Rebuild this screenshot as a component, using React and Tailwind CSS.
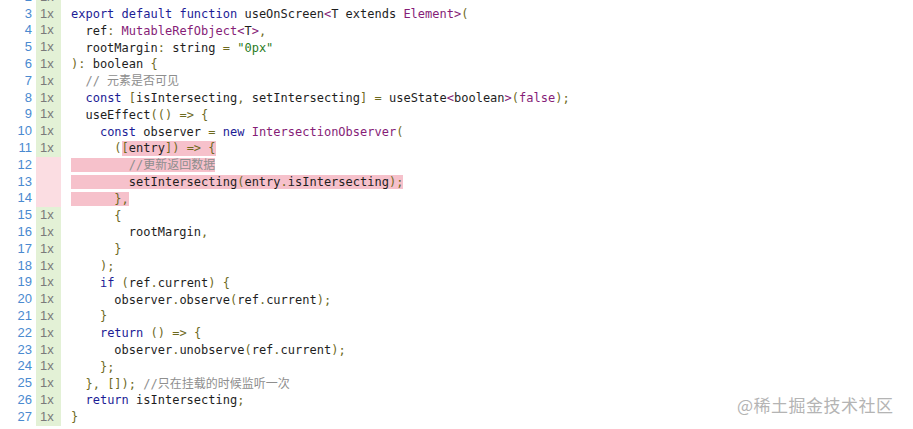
import React from "react";

const K = "text-[#1c1c96]";
const T = "text-[#861d77]";
const S = "text-[#2a7b1c]";
const P = "text-[#6e6a1e]";
const C = "text-[#8e8e8e]";

const lines = [
  { n: 2, t: [] },
  { n: 3, t: [[K, "export"], [null, " "], [K, "default"], [null, " "], [K, "function"], [null, " useOnScreen"], [T, "<"], [null, "T extends "], [T, "Element"], [T, ">"], [P, "("]] },
  { n: 4, t: [[null, "  ref"], [P, ":"], [null, " "], [T, "MutableRefObject"], [T, "<"], [null, "T"], [T, ">"], [P, ","]] },
  { n: 5, t: [[null, "  rootMargin"], [P, ":"], [null, " string "], [P, "="], [null, " "], [S, "\"0px\""]] },
  { n: 6, t: [[P, ")"], [P, ":"], [null, " boolean "], [P, "{"]] },
  { n: 7, t: [[C, "  // 元素是否可见"]] },
  { n: 8, t: [[null, "  "], [K, "const"], [null, " "], [P, "["], [null, "isIntersecting"], [P, ","], [null, " setIntersecting"], [P, "]"], [null, " "], [P, "="], [null, " useState"], [T, "<"], [null, "boolean"], [T, ">"], [P, "("], [T, "false"], [P, ")"], [P, ";"]] },
  { n: 9, t: [[null, "  useEffect"], [P, "(()"], [null, " "], [P, "=>"], [null, " "], [P, "{"]] },
  { n: 10, t: [[null, "    "], [K, "const"], [null, " observer "], [P, "="], [null, " "], [K, "new"], [null, " "], [T, "IntersectionObserver"], [P, "("]] },
  { n: 11, t: [[null, "      "], [P, "("]], hl: [[P, "["], [null, "entry"], [P, "])"], [null, " "], [P, "=>"], [null, " "], [P, "{"]] },
  { n: 12, miss: true, hl: [[null, "        "], [C, "//更新返回数据"]] },
  { n: 13, miss: true, hl: [[null, "        setIntersecting"], [P, "("], [null, "entry"], [P, "."], [null, "isIntersecting"], [P, ")"], [P, ";"]] },
  { n: 14, miss: true, hl: [[null, "      "], [P, "},"]] },
  { n: 15, t: [[null, "      "], [P, "{"]] },
  { n: 16, t: [[null, "        rootMargin"], [P, ","]] },
  { n: 17, t: [[null, "      "], [P, "}"]] },
  { n: 18, t: [[null, "    "], [P, ");"]] },
  { n: 19, t: [[null, "    "], [K, "if"], [null, " "], [P, "("], [null, "ref"], [P, "."], [null, "current"], [P, ")"], [null, " "], [P, "{"]] },
  { n: 20, t: [[null, "      observer"], [P, "."], [null, "observe"], [P, "("], [null, "ref"], [P, "."], [null, "current"], [P, ");"]] },
  { n: 21, t: [[null, "    "], [P, "}"]] },
  { n: 22, t: [[null, "    "], [K, "return"], [null, " "], [P, "()"], [null, " "], [P, "=>"], [null, " "], [P, "{"]] },
  { n: 23, t: [[null, "      observer"], [P, "."], [null, "unobserve"], [P, "("], [null, "ref"], [P, "."], [null, "current"], [P, ");"]] },
  { n: 24, t: [[null, "    "], [P, "};"]] },
  { n: 25, t: [[null, "  "], [P, "},"], [null, " "], [P, "[]);"], [null, " "], [C, "//只在挂载的时候监听一次"]] },
  { n: 26, t: [[null, "  "], [K, "return"], [null, " isIntersecting"], [P, ";"]] },
  { n: 27, t: [[P, "}"]] },
];

function Toks({ toks }) {
  return toks.map(([cls, txt], i) => (
    <span key={i} className={cls || "text-[#1e1e1e]"}>
      {txt}
    </span>
  ));
}

export default function App() {
  return (
    <div className="relative w-[913px] h-[429px] overflow-hidden bg-white">
      <div className="mt-[-11.2px] flex flex-col">
        {lines.map((l) => (
          <div key={l.n} className="flex h-[16.8px] items-stretch">
            <div className="w-[36px] pr-[4px] text-right text-[13px] leading-[16.8px] text-[#4a8ad0] font-['Liberation_Sans',sans-serif]">
              {l.n}
            </div>
            <div
              className={
                "w-[25px] pl-[4px] text-[13px] leading-[16.8px] text-[#7a7a7a] font-['Liberation_Sans',sans-serif] " +
                (l.miss ? "bg-[#fbdde2]" : "bg-[#e3f1d6]")
              }
            >
              {l.miss ? "" : "1x"}
            </div>
            <div className="flex items-center pl-[10px] whitespace-pre text-[12px] font-['DejaVu_Sans_Mono','Noto_Sans_CJK_SC',monospace]">
              {l.t && <Toks toks={l.t} />}
              {l.hl && (
                <span className="inline-flex h-[14.5px] items-center bg-[#f6c1cb]">
                  <Toks toks={l.hl} />
                </span>
              )}
            </div>
          </div>
        ))}
      </div>
      <div className="absolute left-[737px] top-[392px] text-[17px] tracking-[0.5px] text-[#b4b4b4] font-['Noto_Sans_CJK_SC',sans-serif]">
        @稀土掘金技术社区
      </div>
    </div>
  );
}
